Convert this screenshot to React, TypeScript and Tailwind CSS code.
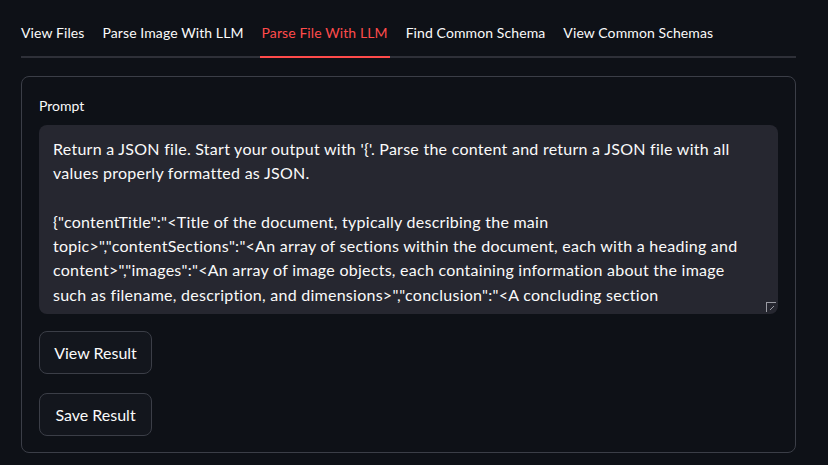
import React from "react";

const tabs = ["View Files", "Parse Image With LLM", "Parse File With LLM", "Find Common Schema", "View Common Schemas"];

const lines = [
  "Return a JSON file. Start your output with '{'. Parse the content and return a JSON file with all",
  "values properly formatted as JSON.",
  "",
  "{\"contentTitle\":\"<Title of the document, typically describing the main",
  "topic>\",\"contentSections\":\"<An array of sections within the document, each with a heading and",
  "content>\",\"images\":\"<An array of image objects, each containing information about the image",
  "such as filename, description, and dimensions>\",\"conclusion\":\"<A concluding section",
];

export default function App() {
  return (
    <div
      className="w-[828px] h-[465px] bg-[#0e1117] text-[#fafafa] overflow-hidden"
      style={{ fontFamily: "Lato, 'Noto Sans', sans-serif" }}
    >
      <div className="pl-[21px] pr-[32px]">
        <div className="flex gap-[18px] h-[58px] border-b-2 border-[#2e3038] items-end">
          {tabs.map((t, i) => (
            <div
              key={t}
              className={
                "relative text-[14px] leading-[20px] pb-[13px] tracking-[0.1px] " +
                (i === 2 ? "text-[#ff4b4b]" : "text-[#fafafa]")
              }
            >
              {t}
              {i === 2 && (
                <div className="absolute left-[-2px] right-[-2px] bottom-[-2px] h-[2px] bg-[#ff4b4b]" />
              )}
            </div>
          ))}
        </div>
        <div className="mt-[18px] h-[377px] border border-[#3b3e47] rounded-[8px] pl-[17px] pr-[17px] pt-[20px]">
          <div className="text-[14px] leading-[18px] mb-[10px]">Prompt</div>
          <div className="relative h-[189px] bg-[#262730] rounded-[8px] pl-[14px] pt-[12px] overflow-hidden">
            {lines.map((l, i) => (
              <div key={i} className="text-[16px] leading-[24.3px] tracking-[0.26px] whitespace-nowrap h-[24.3px]">
                {l}
              </div>
            ))}
            <div className="absolute right-[2px] bottom-[2px] w-[10px] h-[10px] border-l border-t border-[#9a9ba3]" />
            <svg className="absolute right-[3px] bottom-[3px]" width="6" height="6" viewBox="0 0 6 6">
              <line x1="1" y1="5" x2="5" y2="1" stroke="#9a9ba3" strokeWidth="1" />
            </svg>
          </div>
          <div className="flex flex-col items-start gap-[19px] mt-[17px]">
            {["View Result", "Save Result"].map((b) => (
              <div
                key={b}
                className="h-[43px] w-[113px] flex items-center justify-center border border-[#3b3e47] rounded-[8px] bg-[#13161d] text-[16px]"
              >
                {b}
              </div>
            ))}
          </div>
        </div>
      </div>
    </div>
  );
}
